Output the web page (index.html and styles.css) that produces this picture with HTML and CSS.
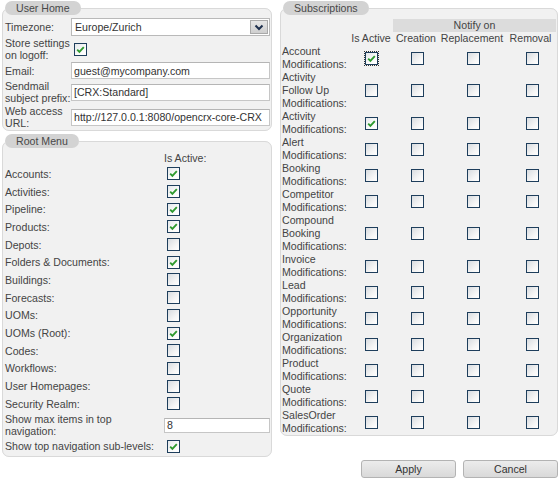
FILE: index.html
```html
<!DOCTYPE html>
<html>
<head>
<meta charset="utf-8">
<link rel="stylesheet" href="styles.css">
</head>
<body>
<div class="page">
  <div class="cols">
    <div class="left">
      <fieldset class="box uh">
        <legend>User Home</legend>
        <div class="uh-grid">
          <div class="lbl">Timezone:</div>
          <div class="select"><span class="sel-text">Europe/Zurich</span><span class="sel-btn"><svg width="10" height="7" viewBox="0 0 10 7"><path d="M1.5 1.5 L5 5 L8.5 1.5" fill="none" stroke="#1d2f4d" stroke-width="2"/></svg></span></div>
          <div class="lbl">Store settings on logoff:</div>
          <div class="cell"><span class="cb on ml3"><svg viewBox="0 0 11 11"><path d="M2.2 5.6 L4.4 7.8 L8.8 3.2" fill="none" stroke="#2f9a2f" stroke-width="1.9"/></svg></span></div>
          <div class="lbl">Email:</div>
          <div class="input">guest@mycompany.com</div>
          <div class="lbl">Sendmail subject prefix:</div>
          <div class="input">[CRX:Standard]</div>
          <div class="lbl">Web access URL:</div>
          <div class="input">http://127.0.0.1:8080/opencrx-core-CRX</div>
        </div>
      </fieldset>
      <fieldset class="box rm">
        <legend>Root Menu</legend>
        <div class="rm-grid">
          <div></div><div class="rm-head">Is Active:</div>
          <div class="lbl">Accounts:</div><div class="cell"><span class="cb on ml3"><svg viewBox="0 0 11 11"><path d="M2.2 5.6 L4.4 7.8 L8.8 3.2" fill="none" stroke="#2f9a2f" stroke-width="1.9"/></svg></span></div>
          <div class="lbl">Activities:</div><div class="cell"><span class="cb on ml3"><svg viewBox="0 0 11 11"><path d="M2.2 5.6 L4.4 7.8 L8.8 3.2" fill="none" stroke="#2f9a2f" stroke-width="1.9"/></svg></span></div>
          <div class="lbl">Pipeline:</div><div class="cell"><span class="cb on ml3"><svg viewBox="0 0 11 11"><path d="M2.2 5.6 L4.4 7.8 L8.8 3.2" fill="none" stroke="#2f9a2f" stroke-width="1.9"/></svg></span></div>
          <div class="lbl">Products:</div><div class="cell"><span class="cb on ml3"><svg viewBox="0 0 11 11"><path d="M2.2 5.6 L4.4 7.8 L8.8 3.2" fill="none" stroke="#2f9a2f" stroke-width="1.9"/></svg></span></div>
          <div class="lbl">Depots:</div><div class="cell"><span class="cb ml3"></span></div>
          <div class="lbl">Folders &amp; Documents:</div><div class="cell"><span class="cb on ml3"><svg viewBox="0 0 11 11"><path d="M2.2 5.6 L4.4 7.8 L8.8 3.2" fill="none" stroke="#2f9a2f" stroke-width="1.9"/></svg></span></div>
          <div class="lbl">Buildings:</div><div class="cell"><span class="cb ml3"></span></div>
          <div class="lbl">Forecasts:</div><div class="cell"><span class="cb ml3"></span></div>
          <div class="lbl">UOMs:</div><div class="cell"><span class="cb ml3"></span></div>
          <div class="lbl">UOMs (Root):</div><div class="cell"><span class="cb on ml3"><svg viewBox="0 0 11 11"><path d="M2.2 5.6 L4.4 7.8 L8.8 3.2" fill="none" stroke="#2f9a2f" stroke-width="1.9"/></svg></span></div>
          <div class="lbl">Codes:</div><div class="cell"><span class="cb ml3"></span></div>
          <div class="lbl">Workflows:</div><div class="cell"><span class="cb ml3"></span></div>
          <div class="lbl">User Homepages:</div><div class="cell"><span class="cb ml3"></span></div>
          <div class="lbl">Security Realm:</div><div class="cell"><span class="cb ml3"></span></div>
          <div class="lbl">Show max items in top navigation:</div><div class="cell"><div class="input small">8</div></div>
          <div class="lbl">Show top navigation sub-levels:</div><div class="cell"><span class="cb on ml3"><svg viewBox="0 0 11 11"><path d="M2.2 5.6 L4.4 7.8 L8.8 3.2" fill="none" stroke="#2f9a2f" stroke-width="1.9"/></svg></span></div>
        </div>
      </fieldset>
    </div>
    <div class="right">
      <fieldset class="box subs">
        <legend>Subscriptions</legend>
        <div class="sub-grid">
          <div class="spacer"></div>
          <div class="notify">Notify on</div>
          <div></div><div class="hd">Is Active</div><div class="hd">Creation</div><div class="hd">Replacement</div><div class="hd">Removal</div>

          <div class="slbl">Account Modifications:</div>
          <div class="c"><span class="cb on focus"><svg viewBox="0 0 11 11"><path d="M2.2 5.6 L4.4 7.8 L8.8 3.2" fill="none" stroke="#2f9a2f" stroke-width="1.9"/></svg></span></div>
          <div class="c"><span class="cb"></span></div><div class="c"><span class="cb"></span></div><div class="c"><span class="cb"></span></div>

          <div class="slbl">Activity Follow Up Modifications:</div>
          <div class="c"><span class="cb"></span></div><div class="c"><span class="cb"></span></div><div class="c"><span class="cb"></span></div><div class="c"><span class="cb"></span></div>

          <div class="slbl">Activity Modifications:</div>
          <div class="c"><span class="cb on"><svg viewBox="0 0 11 11"><path d="M2.2 5.6 L4.4 7.8 L8.8 3.2" fill="none" stroke="#2f9a2f" stroke-width="1.9"/></svg></span></div>
          <div class="c"><span class="cb"></span></div><div class="c"><span class="cb"></span></div><div class="c"><span class="cb"></span></div>

          <div class="slbl">Alert Modifications:</div>
          <div class="c"><span class="cb"></span></div><div class="c"><span class="cb"></span></div><div class="c"><span class="cb"></span></div><div class="c"><span class="cb"></span></div>

          <div class="slbl">Booking Modifications:</div>
          <div class="c"><span class="cb"></span></div><div class="c"><span class="cb"></span></div><div class="c"><span class="cb"></span></div><div class="c"><span class="cb"></span></div>

          <div class="slbl">Competitor Modifications:</div>
          <div class="c"><span class="cb"></span></div><div class="c"><span class="cb"></span></div><div class="c"><span class="cb"></span></div><div class="c"><span class="cb"></span></div>

          <div class="slbl">Compound Booking Modifications:</div>
          <div class="c"><span class="cb"></span></div><div class="c"><span class="cb"></span></div><div class="c"><span class="cb"></span></div><div class="c"><span class="cb"></span></div>

          <div class="slbl">Invoice Modifications:</div>
          <div class="c"><span class="cb"></span></div><div class="c"><span class="cb"></span></div><div class="c"><span class="cb"></span></div><div class="c"><span class="cb"></span></div>

          <div class="slbl">Lead Modifications:</div>
          <div class="c"><span class="cb"></span></div><div class="c"><span class="cb"></span></div><div class="c"><span class="cb"></span></div><div class="c"><span class="cb"></span></div>

          <div class="slbl">Opportunity Modifications:</div>
          <div class="c"><span class="cb"></span></div><div class="c"><span class="cb"></span></div><div class="c"><span class="cb"></span></div><div class="c"><span class="cb"></span></div>

          <div class="slbl">Organization Modifications:</div>
          <div class="c"><span class="cb"></span></div><div class="c"><span class="cb"></span></div><div class="c"><span class="cb"></span></div><div class="c"><span class="cb"></span></div>

          <div class="slbl">Product Modifications:</div>
          <div class="c"><span class="cb"></span></div><div class="c"><span class="cb"></span></div><div class="c"><span class="cb"></span></div><div class="c"><span class="cb"></span></div>

          <div class="slbl">Quote Modifications:</div>
          <div class="c"><span class="cb"></span></div><div class="c"><span class="cb"></span></div><div class="c"><span class="cb"></span></div><div class="c"><span class="cb"></span></div>

          <div class="slbl">SalesOrder Modifications:</div>
          <div class="c"><span class="cb"></span></div><div class="c"><span class="cb"></span></div><div class="c"><span class="cb"></span></div><div class="c"><span class="cb"></span></div>
        </div>
      </fieldset>
    </div>
  </div>
  <div class="actions">
    <span class="btn">Apply</span>
    <span class="btn">Cancel</span>
  </div>
</div>
</body>
</html>
```

FILE: styles.css
```css
html, body {
  margin: 0;
  padding: 0;
  background: #ffffff;
}
body {
  font-family: "Liberation Sans", Arial, sans-serif;
  font-size: 10.6px;
  line-height: 12px;
  color: #3a3a3a;
}
.page {
  width: 560px;
  box-sizing: border-box;
  padding: 1px 2px 0 2px;
}
.cols {
  display: flex;
  gap: 8px;
  align-items: flex-start;
}
.left {
  width: 270px;
  display: flex;
  flex-direction: column;
  gap: 3px;
}
.right {
  width: 278px;
}
.box {
  margin: 0;
  min-width: 0;
  box-sizing: border-box;
  border: 1px solid #d9d9d9;
  border-radius: 7px;
  background: #f1f1f1;
  padding: 0 1px 1px 2px;
}
.box legend {
  height: 14px;
  line-height: 14px;
  padding: 0 11px;
  margin-left: 0;
  background: #d3d3d3;
  border-radius: 7px;
  color: #484848;
}
.uh { padding-top: 3px; padding-bottom: 1px; }
.rm { padding-top: 2px; padding-bottom: 1px; }
.subs { padding: 4px 1px 0 1px; }
.subs legend { margin-left: 1px; }

.uh-grid {
  display: grid;
  grid-template-columns: 66px 1fr;
  grid-template-rows: 18px 24px 17px 24px 24px;
  row-gap: 1px;
  align-items: center;
}
.lbl {
  color: #444;
}
.cell {
  display: flex;
  align-items: center;
}
.ml3 { margin-left: 3px; }

.select {
  height: 18px;
  box-sizing: border-box;
  border: 1px solid #b9b9b9;
  background: #fff;
  display: flex;
  align-items: center;
  padding: 1px 1px 1px 3px;
}
.sel-text { flex: 1; color: #333; }
.sel-btn {
  width: 18px;
  height: 14px;
  box-sizing: border-box;
  border: 1px solid #a9a9a9;
  background: linear-gradient(#e6e6e6, #cfcfcf);
  display: flex;
  align-items: center;
  justify-content: center;
}
.input {
  height: 17px;
  box-sizing: border-box;
  border: 1px solid #c6c6c6;
  border-top-color: #b5b5b5;
  background: #fff;
  padding: 0 2px;
  display: flex;
  align-items: center;
  color: #333;
  white-space: nowrap;
  overflow: hidden;
}
.input.small { height: 15px; width: 100%; }

.cb {
  width: 13px;
  height: 13px;
  box-sizing: border-box;
  border: 1px solid #1e3e5c;
  background: linear-gradient(135deg, #d8dce0 0%, #f6f6f6 65%, #ffffff 100%);
  display: inline-flex;
  align-items: center;
  justify-content: center;
}
.cb.on {
  background: linear-gradient(135deg, #e4e8ea 0%, #fbfbfb 60%, #ffffff 100%);
}
.cb svg { width: 11px; height: 11px; display: block; }
.cb.focus { outline: 1px dotted #333; outline-offset: 0; }

.rm-grid {
  display: grid;
  grid-template-columns: 159px 1fr;
  grid-template-rows: 15px repeat(14, 17.7px) 25px 17.7px;
  align-items: center;
}
.rm-head { color: #444; }

.sub-grid {
  display: grid;
  grid-template-columns: 67px 44px 46px 66px 51px;
  line-height: 13px;
  align-items: center;
}
.spacer { grid-column: span 2; height: 13px; }
.notify {
  grid-column: span 3;
  background: #dcdcdc;
  text-align: center;
  color: #444;
}
.hd {
  text-align: center;
  color: #444;
  white-space: nowrap;
}
.slbl { color: #444; }
.c {
  display: flex;
  justify-content: center;
  align-items: center;
}
.c:nth-child(5n+10) { padding-left: 3px; }
.c:nth-child(5n+11) { padding-left: 3px; }
.c:nth-child(5n+12) { padding-left: 4px; }

.actions {
  display: flex;
  justify-content: flex-end;
  gap: 7px;
  margin-top: 3px;
}
.btn {
  width: 95px;
  height: 18px;
  box-sizing: border-box;
  border: 1px solid #b3b3b3;
  border-radius: 3px;
  background: linear-gradient(#ececec, #d9d9d9);
  color: #333;
  display: flex;
  align-items: center;
  justify-content: center;
}
```
